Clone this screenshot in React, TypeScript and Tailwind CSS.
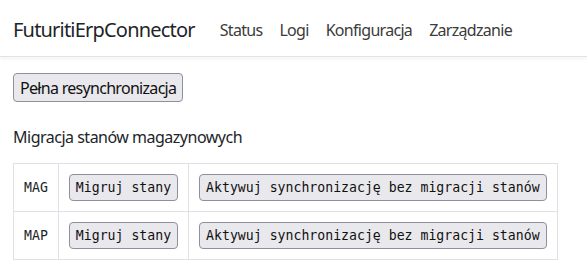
import React from "react";

const sans = { fontFamily: '"Noto Sans", "Open Sans", sans-serif' };

function Btn({ children, mono }: { children: React.ReactNode; mono?: boolean }) {
  return (
    <button
      className={
        mono
          ? "h-[27px] px-[6px] bg-[#e9e9ed] border border-[#8f8f9d] rounded-[4px] text-[13.2px] text-[#111] leading-none whitespace-nowrap font-['DejaVu_Sans_Mono',monospace]"
          : "h-[29px] px-[6px] bg-[#e9e9ed] border border-[#8f8f9d] rounded-[4px] text-[16px] text-[#111] leading-none whitespace-nowrap tracking-[-0.7px]"
      }
    >
      {children}
    </button>
  );
}

export default function App() {
  const rows = ["MAG", "MAP"];
  return (
    <div className="min-h-[279px] bg-white text-[#212529]" style={sans}>
      <nav className="h-[57px] border-b border-[#e3e3e3] shadow-[0_2px_4px_rgba(0,0,0,0.05)] bg-white flex items-center pl-[13px] pt-[4px]">
        <span className="text-[20px] text-[#212529] mr-[25px] tracking-[-0.8px]">FuturitiErpConnector</span>
        <div className="flex items-center gap-[17px] text-[16px] text-[#3b3b3b] tracking-[-0.7px]">
          <span>Status</span>
          <span>Logi</span>
          <span>Konfiguracja</span>
          <span>Zarządzanie</span>
        </div>
      </nav>
      <div className="px-[13px] pt-[16px]">
        <Btn>Pełna resynchronizacja</Btn>
        <div className="mt-[23px] text-[16px] text-[#212529] tracking-[-0.5px] leading-[24px]">
          Migracja stanów magazynowych
        </div>
        <table className="mt-[14px] border-collapse border border-[#dee2e6] font-['DejaVu_Sans_Mono',monospace] text-[13.2px] text-[#212529]">
          <tbody>
            {rows.map((r) => (
              <tr key={r} className="h-[48px]">
                <td className="border border-[#dee2e6] px-[10px] py-0 align-middle">{r}</td>
                <td className="border border-[#dee2e6] px-[10px] py-0 align-middle">
                  <Btn mono>Migruj stany</Btn>
                </td>
                <td className="border border-[#dee2e6] px-[10px] py-0 align-middle">
                  <Btn mono>Aktywuj synchronizację bez migracji stanów</Btn>
                </td>
              </tr>
            ))}
          </tbody>
        </table>
      </div>
    </div>
  );
}
